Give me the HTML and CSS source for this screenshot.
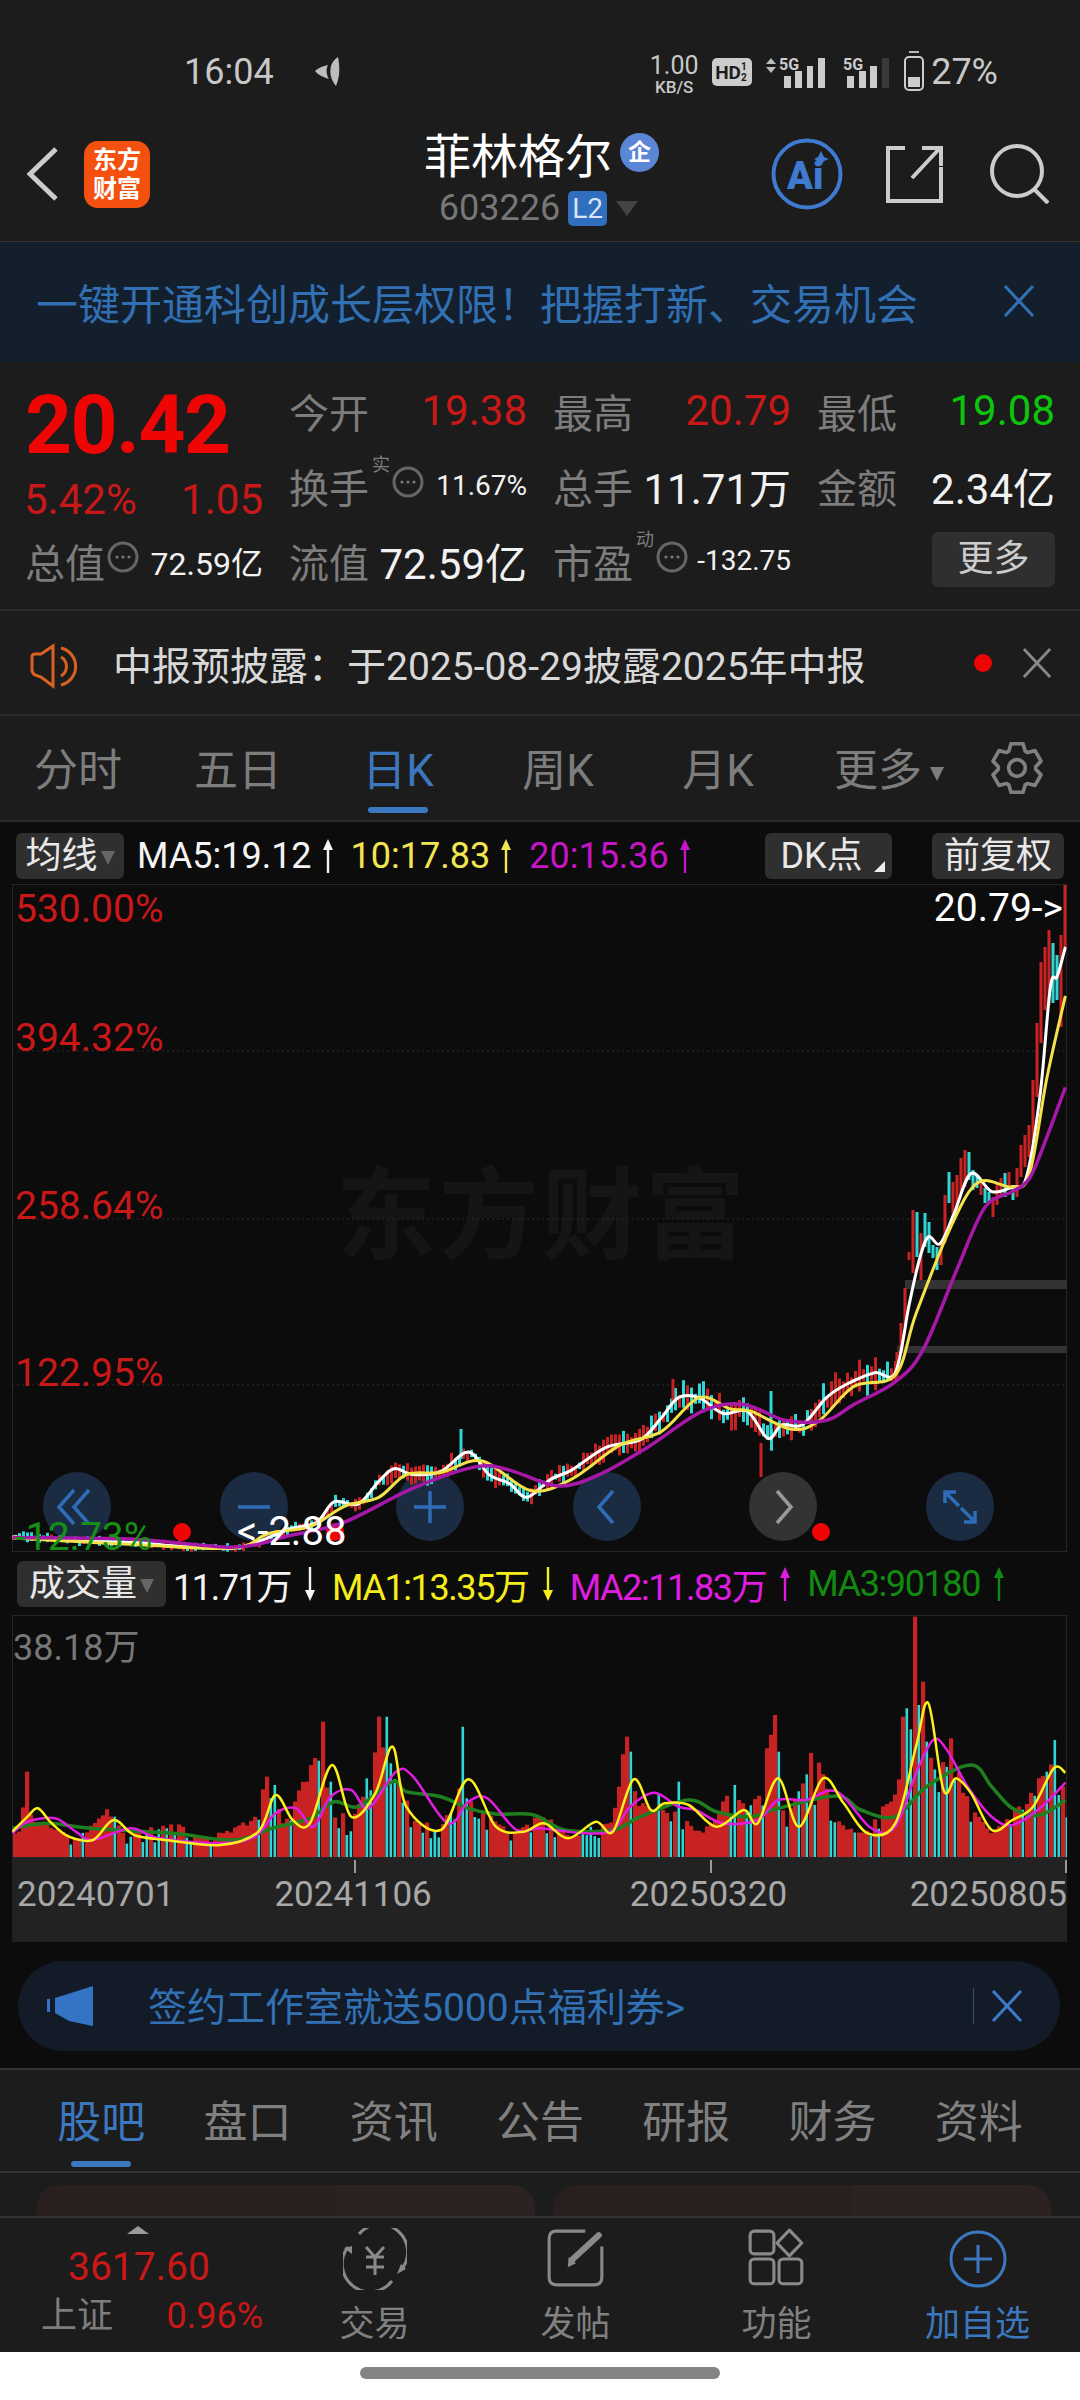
FILE: index.html
```html
<!DOCTYPE html>
<html lang="zh-CN">
<head>
  <meta charset="UTF-8">
  <meta name="viewport" content="width=device-width, initial-scale=1.0">
  <title>菲林格尔 603226</title>
  <link rel="stylesheet" href="styles.css">
</head>
<body>
  <svg class="defs" width="0" height="0">
    <symbol id="close" viewBox="0 0 32 32"><path d="M2 1 30 31M30 1 2 31" fill="none" stroke="currentColor" stroke-width="3"/></symbol>
    <symbol id="dots" viewBox="0 0 32 32"><circle cx="16" cy="16" r="14" fill="none" stroke="#666" stroke-width="3"/><circle cx="10" cy="16" r="1.6" fill="#777"/><circle cx="16" cy="16" r="1.6" fill="#777"/><circle cx="22" cy="16" r="1.6" fill="#777"/></symbol>
    <symbol id="up" viewBox="0 0 10 34"><path d="M5 0 10 11H6.2V34H3.8V11H0z" fill="currentColor"/></symbol>
    <symbol id="down" viewBox="0 0 10 34"><path d="M5 34 10 23H6.2V0H3.8V23H0z" fill="currentColor"/></symbol>
  </svg>

  <div class="phone">
    <div class="status">
      <span class="clock">16:04</span>
      <svg class="leaf" width="30" height="30" viewBox="0 0 30 30"><path d="M26 0C28 10 28 20 24 29 20 24 17 18 19 9 20 5 23 2 26 0ZM16 8C14 12 14 17 17 22 11 20 6 18 3 14 6 11 11 9 16 8Z" fill="#bdbdbd"/></svg>
      <div class="status-right">
        <div class="speed"><span class="speed-num">1.00</span><span class="speed-unit">KB/S</span></div>
        <div class="hd">HD<span class="hd-frac">1<br>2</span></div>
        <svg class="sig-a" width="62" height="38" viewBox="0 0 62 38">
          <path d="M5 2 10 8H0zM0 11H10L5 17z" fill="#bbb"/>
          <text x="13" y="14" class="sig-text">5G</text>
          <rect x="18" y="20" width="7" height="12" fill="#ccc"/><rect x="29" y="15" width="7" height="17" fill="#ccc"/><rect x="41" y="10" width="6" height="22" fill="#ccc"/><rect x="52" y="2" width="7" height="30" fill="#ccc"/>
        </svg>
        <svg class="sig-b" width="48" height="38" viewBox="0 0 48 38">
          <text x="0" y="14" class="sig-text">5G</text>
          <rect x="4" y="20" width="7" height="12" fill="#ccc"/><rect x="16" y="15" width="7" height="17" fill="#ccc"/><rect x="27" y="10" width="7" height="22" fill="#ccc"/><rect x="39" y="2" width="7" height="30" fill="#3a3a3a"/>
        </svg>
        <svg class="batt" width="22" height="40" viewBox="0 0 22 40"><rect x="6" y="0" width="10" height="2" fill="#bbb"/><rect x="2" y="6" width="18" height="33" rx="4" fill="none" stroke="#ccc" stroke-width="2"/><rect x="5" y="26" width="12" height="10" fill="#ccc"/></svg>
        <span class="batt-num">27%</span>
      </div>
    </div>

    <div class="nav">
      <div class="nav-left">
        <svg class="back" width="31" height="54" viewBox="0 0 31 54"><path d="M29 2 3 27 29 52" fill="none" stroke="#ccc" stroke-width="5"/></svg>
        <div class="logo">东方<br>财富</div>
      </div>
      <div class="nav-mid">
        <div class="title-row"><span class="title">菲林格尔</span><span class="ent">企</span></div>
        <div class="code-row"><span class="code">603226</span><span class="l2">L2</span><span class="code-tri"></span></div>
      </div>
      <div class="nav-right">
        <svg width="72" height="72" viewBox="0 0 72 72"><circle cx="36" cy="36" r="33.5" fill="none" stroke="#3e7ad0" stroke-width="4"/><text x="16" y="51" class="ai-text">Ai</text><path d="M50 13 53 19 58 21 53 23 50 28 47 23 43 21 47 19z" fill="#3e7ad0"/></svg>
        <svg class="share" width="58" height="58" viewBox="0 0 58 58"><path d="M19 3H2V56H55V22" fill="none" stroke="#ccc" stroke-width="4"/><path d="M26 33 54 3M36 3H55V21" fill="none" stroke="#ccc" stroke-width="4"/></svg>
        <svg class="search" width="60" height="60" viewBox="0 0 60 60"><circle cx="27" cy="27" r="25" fill="none" stroke="#ccc" stroke-width="4"/><path d="M44 45 58 59" stroke="#ccc" stroke-width="4"/></svg>
      </div>
    </div>

    <div class="banner">
      <span>一键开通科创成长层权限&#xFF01;把握打新、交易机会</span>
      <svg class="icon-x banner-x"><use href="#close"/></svg>
    </div>

    <div class="quote">
      <div class="price-box">
        <div class="price">20.42</div>
        <div class="change"><span>5.42%</span><span>1.05</span></div>
      </div>
      <div class="cell"><span class="lab">今开</span><span class="val up">19.38</span></div>
      <div class="cell"><span class="lab">最高</span><span class="val up">20.79</span></div>
      <div class="cell"><span class="lab">最低</span><span class="val down">19.08</span></div>
      <div class="cell"><span class="lab">换手</span><span class="tag">实</span><svg class="dots"><use href="#dots"/></svg><span class="val small">11.67%</span></div>
      <div class="cell"><span class="lab">总手</span><span class="val">11.71万</span></div>
      <div class="cell"><span class="lab">金额</span><span class="val">2.34亿</span></div>
      <div class="cell first"><span class="lab">总值</span><svg class="dots dots-tight"><use href="#dots"/></svg><span class="val mid">72.59亿</span></div>
      <div class="cell"><span class="lab">流值</span><span class="val">72.59亿</span></div>
      <div class="cell"><span class="lab">市盈</span><span class="tag">动</span><svg class="dots"><use href="#dots"/></svg><span class="val small">-132.75</span></div>
      <div class="cell more-cell"><span class="more-btn">更多</span></div>
    </div>

    <div class="notice">
      <svg width="80" height="80" viewBox="0 0 80 80"><path d="M12 34V47Q12 50 15 52L21 54 33 63V23L21 31 15 31Q12 31 12 34Z" fill="none" stroke="#d9621e" stroke-width="3"/><path d="M41 34A11 11 0 0 1 41 53M41 25A19 19 0 0 1 41 62" fill="none" stroke="#d9621e" stroke-width="3"/></svg>
      <span class="notice-text">中报预披露&#xFF1A;于2025-08-29披露2025年中报</span>
      <span class="red-dot"></span>
      <svg class="icon-x notice-x"><use href="#close"/></svg>
    </div>

    <div class="periods">
      <div class="period-list">
        <span class="period">分时</span>
        <span class="period">五日</span>
        <span class="period on">日K</span>
        <span class="period">周K</span>
        <span class="period">月K</span>
        <span class="period period-more">更多<i class="mini-tri"></i></span>
      </div>
      <svg class="gear" width="52" height="52" viewBox="0 0 50 50"><polygon points="17.1,8.8 19.2,1.7 30.8,1.7 32.9,8.8 35.1,10.1 42.3,8.3 48.1,18.4 43,23.7 43,26.3 48.1,31.6 42.3,41.7 35.1,39.9 32.9,41.2 30.8,48.3 19.2,48.3 17.1,41.2 14.9,39.9 7.7,41.7 1.9,31.6 7,26.3 7,23.7 1.9,18.4 7.7,8.3 14.9,10.1" fill="none" stroke="#808080" stroke-width="3.5" stroke-linejoin="round"/><circle cx="25" cy="25" r="8" fill="none" stroke="#808080" stroke-width="3.5"/></svg>
    </div>

    <div class="chart-area">
      <div class="ma-row">
        <span class="pick pick-ma">均线<i class="mini-tri dim"></i></span>
        <span class="ma white">MA5:19.12<svg class="arr"><use href="#up"/></svg></span>
        <span class="ma yellow">10:17.83<svg class="arr"><use href="#up"/></svg></span>
        <span class="ma purple">20:15.36<svg class="arr"><use href="#up"/></svg></span>
        <span class="pick pick-dk">DK点<i class="corner"></i></span>
        <span class="pick pick-fq">前复权</span>
      </div>

      <div class="plot" id="kPlot">
        <div class="watermark">东方财富</div>
        <div class="zoom-btns">
          <span class="round"><svg width="68" height="68" viewBox="0 0 68 68"><path d="M31 17 16 34 31 51M46 17 31 34 46 51" fill="none" stroke="#2f6cb8" stroke-width="3.5"/></svg></span>
          <span class="round"><svg width="68" height="68" viewBox="0 0 68 68"><path d="M18 34H50" stroke="#2f6cb8" stroke-width="3.5"/></svg></span>
          <span class="round"><svg width="68" height="68" viewBox="0 0 68 68"><path d="M18 34H50M34 18V50" stroke="#2f6cb8" stroke-width="3.5"/></svg></span>
          <span class="round"><svg width="68" height="68" viewBox="0 0 68 68"><path d="M40 18 26 34 40 50" fill="none" stroke="#2f6cb8" stroke-width="3.5"/></svg></span>
          <span class="round gray"><svg width="68" height="68" viewBox="0 0 68 68"><path d="M28 18 42 34 28 50" fill="none" stroke="#999" stroke-width="3.5"/></svg></span>
          <span class="round"><svg width="68" height="68" viewBox="0 0 68 68"><path d="M19 30V19H30M19 19 33 33M49 38V49H38M49 49 35 35" fill="none" stroke="#2f6cb8" stroke-width="3.5"/></svg></span>
        </div>
        <svg class="plot-svg" id="kSvg" viewBox="12 884 1055 668"></svg>
        <span class="axis-pct p1">530.00%</span>
        <span class="axis-pct p2">394.32%</span>
        <span class="axis-pct p3">258.64%</span>
        <span class="axis-pct p4">122.95%</span>
        <span class="axis-pct p5">-12.73%</span>
        <span class="mark-hi">20.79-&gt;</span>
        <span class="mark-lo">&lt;-2.88</span>
      </div>

      <div class="vol-row">
        <span class="pick pick-vol">成交量<i class="mini-tri dim"></i></span>
        <span class="ma white vol-first">11.71万<svg class="arr"><use href="#down"/></svg></span>
        <span class="ma yellow2">MA1:13.35万<svg class="arr"><use href="#down"/></svg></span>
        <span class="ma magenta">MA2:11.83万<svg class="arr"><use href="#up"/></svg></span>
        <span class="ma green">MA3:90180<svg class="arr"><use href="#up"/></svg></span>
      </div>

      <div class="plot vol-plot">
        <svg class="plot-svg" id="volSvg" viewBox="12 1615 1055 243"></svg>
        <span class="vol-max">38.18万</span>
      </div>

      <div class="dates">
        <i class="tick t1"></i><i class="tick t2"></i><i class="tick t3"></i>
        <span class="date d1">20240701</span>
        <span class="date d2">20241106</span>
        <span class="date d3">20250320</span>
        <span class="date d4">20250805</span>
      </div>

      <div class="promo">
        <svg width="48" height="42" viewBox="0 0 48 42"><path d="M46 1 8 13V28L22 36 46 41Z" fill="#3375c4"/><rect x="0" y="14" width="3" height="13" fill="#3375c4"/></svg>
        <span class="promo-text">签约工作室就送5000点福利券&gt;</span>
        <i class="promo-line"></i>
        <svg class="icon-x promo-x"><use href="#close"/></svg>
      </div>
    </div>

    <div class="info-tabs">
      <span class="info-tab on">股吧</span>
      <span class="info-tab">盘口</span>
      <span class="info-tab">资讯</span>
      <span class="info-tab">公告</span>
      <span class="info-tab">研报</span>
      <span class="info-tab">财务</span>
      <span class="info-tab">资料</span>
    </div>

    <div class="peek">
      <div class="peek-card"></div>
      <div class="peek-card"></div>
    </div>

    <div class="bottom">
      <div class="index">
        <i class="index-tri"></i>
        <span class="index-num">3617.60</span>
        <div class="index-row"><span class="index-name">上证</span><span class="index-pct">0.96%</span></div>
      </div>
      <div class="tool">
        <svg width="64" height="62" viewBox="0 0 64 62"><path d="M16 6A27 27 0 0 1 58 42M49 53A27 27 0 0 1 5 19" fill="none" stroke="#8a8a8a" stroke-width="3"/><path d="M1 20 9 18 9 26zM54 46 63 41 58 36z" fill="#8a8a8a"/><path d="M23 19 32 29 41 19M23 29H41M23 39H41M32 29V47" fill="none" stroke="#8a8a8a" stroke-width="3"/></svg>
        <span>交易</span>
      </div>
      <div class="tool">
        <svg width="64" height="62" viewBox="0 0 58 60"><path d="M38 3H10Q3 3 3 10V48Q3 55 10 55H47Q54 55 54 48V18" fill="none" stroke="#8a8a8a" stroke-width="3"/><path d="M25 31 51 7" stroke="#8a8a8a" stroke-width="6" stroke-linecap="round"/><path d="M21 38 22 28 29 34z" fill="#8a8a8a"/></svg>
        <span>发帖</span>
      </div>
      <div class="tool">
        <svg width="64" height="62" viewBox="0 0 58 60"><rect x="3" y="3" width="23" height="22" rx="4" fill="none" stroke="#8a8a8a" stroke-width="3"/><path d="M41 2 53 14.5 41 27 29 14.5Z" fill="none" stroke="#8a8a8a" stroke-width="3" stroke-linejoin="round"/><rect x="3" y="30" width="23" height="24" rx="4" fill="none" stroke="#8a8a8a" stroke-width="3"/><rect x="31" y="30" width="22" height="24" rx="4" fill="none" stroke="#8a8a8a" stroke-width="3"/></svg>
        <span>功能</span>
      </div>
      <div class="tool tool-on">
        <svg width="64" height="62" viewBox="0 0 64 62"><circle cx="32" cy="31" r="27" fill="none" stroke="#3c78c0" stroke-width="3"/><path d="M18 31H46M32 17V45" stroke="#3c78c0" stroke-width="3"/></svg>
        <span>加自选</span>
      </div>
    </div>

    <div class="home"><i class="home-bar"></i></div>
  </div>

  <script src="chart.js"></script>
</body>
</html>
```
FILE: styles.css
```css
* {
  box-sizing: border-box;
}

body {
  margin: 0;
  background: #fff;
  font-family: Roboto, "Noto Sans CJK SC", sans-serif;
}

.defs {
  position: absolute;
}

.phone {
  width: 1080px;
  height: 2400px;
  overflow: hidden;
  background: #1c1c1c;
  display: flex;
  flex-direction: column;
}

/* status bar */
.status {
  height: 120px;
  padding: 44px 0 0 184px;
  display: flex;
  align-items: flex-start;
  color: #c8c8c8;
}

.clock {
  font-size: 36px;
  line-height: 56px;
}

.leaf {
  margin: 13px 0 0 38px;
}

.status-right {
  margin-left: auto;
  padding-right: 82px;
  display: flex;
  align-items: flex-start;
}

.speed {
  width: 48px;
  margin-top: 9px;
  display: flex;
  flex-direction: column;
  align-items: center;
}

.speed-num {
  font-size: 25px;
  line-height: 25px;
}

.speed-unit {
  font-size: 17px;
  font-weight: 500;
  line-height: 18px;
}

.hd {
  width: 40px;
  height: 28px;
  margin: 14px 0 0 14px;
  padding-left: 3px;
  border-radius: 5px;
  background: #ccc;
  color: #1c1c1c;
  display: flex;
  align-items: center;
  font-size: 19px;
  font-weight: 700;
}

.hd-frac {
  font-size: 10px;
  line-height: 11px;
}

.sig-a {
  margin: 12px 0 0 14px;
}

.sig-b {
  margin: 12px 0 0 15px;
}

.sig-text {
  font-size: 16px;
  font-weight: 700;
  fill: #ccc;
}

.batt {
  margin: 7px 0 0 12px;
}

.batt-num {
  margin-left: 6px;
  font-size: 36px;
  line-height: 56px;
}

/* title bar */
.nav {
  height: 122px;
  padding: 0 30px 0 27px;
  border-bottom: 1px solid #333;
  display: grid;
  grid-template-columns: 1fr auto 1fr;
}

.nav-left {
  display: flex;
  align-items: center;
  gap: 26px;
  padding-bottom: 13px;
}

.logo {
  width: 66px;
  height: 67px;
  border-radius: 14px;
  background: #f4500f;
  color: #fff;
  font-size: 24px;
  font-weight: 700;
  line-height: 29px;
  text-align: center;
  padding-top: 5px;
}

.nav-mid {
  display: flex;
  flex-direction: column;
  align-items: center;
}

.title-row {
  margin-top: 4px;
  height: 56px;
  display: flex;
  align-items: center;
  gap: 8px;
  padding-left: 6px;
}

.title {
  font-size: 47px;
  color: #fff;
}

.ent {
  width: 39px;
  height: 39px;
  border-radius: 50%;
  background: #5b86d6;
  color: #fff;
  font-size: 23px;
  font-weight: 700;
  text-align: center;
  line-height: 39px;
}

.code-row {
  margin-top: 8px;
  display: flex;
  align-items: center;
}

.code {
  font-size: 36px;
  line-height: 40px;
  color: #777;
}

.l2 {
  width: 39px;
  height: 35px;
  margin-left: 8px;
  border-radius: 5px;
  background: #2f6fbd;
  color: #d6e4f5;
  font-size: 28px;
  line-height: 35px;
  text-align: center;
}

.code-tri {
  margin-left: 9px;
  border-left: 11px solid transparent;
  border-right: 11px solid transparent;
  border-top: 15px solid #444;
}

.nav-right {
  display: flex;
  align-items: center;
  justify-content: flex-end;
  padding-bottom: 13px;
}

.share {
  margin-left: 43px;
}

.search {
  margin-left: 46px;
}

.ai-text {
  font-size: 38px;
  font-weight: 900;
  fill: #3e7ad0;
}

.icon-x {
  display: block;
}

/* blue banner */
.banner {
  height: 120px;
  padding: 0 45px 2px 36px;
  background: #141f2d;
  color: #3270b4;
  font-size: 42px;
  display: flex;
  align-items: center;
  justify-content: space-between;
}

.banner-x {
  width: 32px;
  height: 32px;
}

/* quote table */
.quote {
  height: 249px;
  padding: 11px 25px 0 27px;
  border-bottom: 2px solid #2b2b2b;
  display: grid;
  grid-template-columns: 236px 238px 238px 238px;
  grid-template-rows: 75px 75px 75px;
  column-gap: 26px;
}

.price-box {
  grid-row: 1 / span 2;
  padding-top: 3px;
}

.price {
  margin-left: -2px;
  font-size: 82px;
  font-weight: 700;
  line-height: 98px;
  color: #f00505;
  letter-spacing: -1.5px;
}

.change {
  margin-left: -3px;
  display: flex;
  justify-content: space-between;
  font-size: 42px;
  line-height: 52px;
  color: #c91818;
}

.cell {
  display: flex;
  align-items: center;
  min-width: 0;
}

.lab {
  font-size: 40px;
  color: #7d7d7d;
}

.val {
  margin-left: auto;
  font-size: 42px;
  color: #f2f2f2;
  white-space: nowrap;
}

.val.up {
  color: #c91818;
}

.val.down {
  color: #0dc40d;
}

.val.small {
  font-size: 28px;
}

.val.mid {
  font-size: 32px;
}

.tag {
  align-self: flex-start;
  margin: 7px 0 0 3px;
  font-size: 18px;
  line-height: 20px;
  color: #7d7d7d;
}

.dots {
  width: 32px;
  height: 32px;
  margin-left: 2px;
  margin-top: -8px;
  flex: none;
}

.dots-tight {
  margin-left: 2px;
}

.first {
  grid-column: 1;
  margin-left: -2px;
}

.more-cell {
  justify-content: flex-end;
}

.more-btn {
  width: 123px;
  height: 55px;
  margin-top: -2px;
  border-radius: 6px;
  background: #2f2f2f;
  color: #ccc;
  font-size: 36px;
  line-height: 55px;
  text-align: center;
}

/* notice */
.notice {
  height: 105px;
  padding: 0 28px 0 20px;
  border-bottom: 2px solid #2b2b2b;
  display: flex;
  align-items: center;
}

.notice-text {
  margin-left: 13px;
  font-size: 39px;
  color: #d8d8d8;
}

.red-dot {
  width: 18px;
  height: 18px;
  margin-left: auto;
  border-radius: 50%;
  background: #f00505;
}

.notice-x {
  width: 30px;
  height: 30px;
  margin-left: 30px;
  color: #888;
}

/* period tabs */
.periods {
  height: 104px;
  display: flex;
  align-items: center;
}

.period-list {
  margin-left: -2px;
  padding-top: 6px;
  display: grid;
  grid-template-columns: repeat(6, 160px);
}

.period {
  position: relative;
  font-size: 44px;
  line-height: 60px;
  color: #7d7d7d;
  text-align: center;
}

.period.on {
  color: #3c78c0;
}

.period.on::after {
  content: "";
  position: absolute;
  left: 50px;
  bottom: -12px;
  width: 60px;
  height: 6px;
  border-radius: 3px;
  background: #3c78c0;
}

.period-more {
  padding-left: 22px;
}

.mini-tri {
  display: inline-block;
  margin-left: 8px;
  vertical-align: middle;
  border-left: 7px solid transparent;
  border-right: 7px solid transparent;
  border-top: 14px solid #7d7d7d;
}

.mini-tri.dim {
  margin-left: 3px;
  border-top-color: #666;
}

.gear {
  margin-left: 33px;
  flex: none;
}

/* chart */
.chart-area {
  height: 1248px;
  border-top: 2px solid #2b2b2b;
  background: #0c0c0c;
}

.ma-row {
  height: 62px;
  padding: 6px 16px 0;
  display: flex;
  align-items: center;
  gap: 18px;
}

.pick {
  height: 46px;
  border-radius: 6px;
  background: #2f2f2f;
  color: #e8e8e8;
  font-size: 36px;
  line-height: 46px;
  text-align: center;
  white-space: nowrap;
}

.pick-ma {
  width: 108px;
  margin-right: -5px;
}

.pick-dk {
  position: relative;
  width: 127px;
  margin-left: auto;
  padding-right: 14px;
}

.corner {
  position: absolute;
  right: 7px;
  bottom: 7px;
  border-left: 11px solid transparent;
  border-bottom: 11px solid #eee;
}

.pick-fq {
  width: 132px;
  margin-left: 22px;
}

.ma {
  font-size: 36px;
  display: flex;
  align-items: center;
  gap: 11px;
  white-space: nowrap;
}

.arr {
  width: 10px;
  height: 34px;
  flex: none;
}

.white { color: #f4f4f4; }
.yellow { color: #f2e650; }
.purple { color: #c814c8; }
.yellow2 { color: #f6ee1a; }
.magenta { color: #e01ce0; }
.green { color: #128a12; }

.plot {
  position: relative;
  width: 1055px;
  height: 668px;
  margin-left: 12px;
  border: 1px solid #262626;
}

.plot-svg {
  position: absolute;
  left: -1px;
  top: -1px;
  width: 1055px;
  height: 668px;
}

.watermark {
  position: absolute;
  left: 323px;
  top: 282px;
  font-size: 100px;
  font-weight: 700;
  line-height: 100px;
  letter-spacing: 3px;
  color: #151515;
  white-space: nowrap;
}

.zoom-btns {
  position: absolute;
  left: 30px;
  right: 72px;
  top: 587px;
  display: flex;
  justify-content: space-between;
}

.round {
  width: 68px;
  height: 69px;
  border-radius: 50%;
  background: #1b2c42;
  display: flex;
  align-items: center;
}

.round.gray {
  background: #333;
}

.axis-pct {
  position: absolute;
  left: 2px;
  font-size: 39px;
  line-height: 44px;
  color: #c81818;
}

.p1 { top: 2px; }
.p2 { top: 131px; }
.p3 { top: 299px; }
.p4 { top: 466px; }
.p5 { top: 630px; color: #159015; }

.mark-hi {
  position: absolute;
  right: 3px;
  top: 1px;
  font-size: 39px;
  line-height: 44px;
  color: #fff;
}

.mark-lo {
  position: absolute;
  left: 224px;
  top: 625px;
  font-size: 40px;
  line-height: 44px;
  color: #fff;
}

.vol-row {
  height: 63px;
  padding: 0 16px 0 17px;
  display: flex;
  align-items: center;
  gap: 17px;
}

.vol-row .ma {
  letter-spacing: -1.4px;
  gap: 14px;
}

.pick-vol {
  width: 149px;
  margin-right: -10px;
}

.vol-plot {
  height: 243px;
}

.vol-plot .plot-svg {
  height: 243px;
}

.vol-max {
  position: absolute;
  left: 0;
  top: 10px;
  font-size: 36px;
  line-height: 44px;
  color: #777;
}

.dates {
  position: relative;
  width: 1055px;
  height: 84px;
  margin-left: 12px;
  background: #222;
  display: flex;
  padding-top: 15px;
  font-size: 35px;
  line-height: 44px;
  color: #a8a8a8;
}

.tick {
  position: absolute;
  top: 2px;
  width: 2px;
  height: 13px;
  background: #999;
}

.t1 { left: 342px; }
.t2 { left: 698px; }
.t3 { right: 0; }

.d1 { margin-left: 5px; }
.d2 { margin-left: 100px; }
.d3 { margin-left: 198px; }
.d4 { margin-left: auto; }

.promo {
  height: 90px;
  margin: 19px 20px 0 18px;
  padding: 0 36px 0 29px;
  border-radius: 45px;
  background: #121b27;
  display: flex;
  align-items: center;
}

.promo-text {
  margin: 0 0 4px 53px;
  font-size: 39px;
  color: #3270b4;
}

.promo-line {
  width: 1px;
  height: 36px;
  margin-left: auto;
  background: #3a4f68;
}

.promo-x {
  width: 34px;
  height: 32px;
  margin-left: 16px;
  color: #3a7ac8;
}

/* lower tabs */
.info-tabs {
  height: 105px;
  padding: 4px 28px 0;
  border-top: 2px solid #333;
  border-bottom: 2px solid #333;
  display: grid;
  grid-template-columns: repeat(7, 1fr);
  align-items: center;
}

.info-tab {
  position: relative;
  font-size: 44px;
  line-height: 60px;
  color: #808080;
  text-align: center;
}

.info-tab.on {
  color: #3c78c0;
}

.info-tab.on::after {
  content: "";
  position: absolute;
  left: 43px;
  bottom: -14px;
  width: 60px;
  height: 6px;
  border-radius: 3px;
  background: #3c78c0;
}

.peek {
  height: 43px;
  padding: 12px 29px 0 36px;
  overflow: hidden;
  display: flex;
  gap: 18px;
}

.peek-card {
  flex: 1;
  height: 90px;
  border-radius: 24px;
  background: linear-gradient(to right, #2a1f1f 60%, #2c2222 60%);
}

/* bottom bar */
.bottom {
  height: 136px;
  border-top: 2px solid #333;
  display: grid;
  grid-template-columns: 274px repeat(4, 201px);
}

.index {
  padding: 8px 16px 0 41px;
  display: flex;
  flex-direction: column;
}

.index-tri {
  align-self: flex-start;
  margin-left: 86px;
  border-left: 11px solid transparent;
  border-right: 11px solid transparent;
  border-bottom: 8px solid #999;
}

.index-num {
  margin: 8px 0 0 27px;
  font-size: 39px;
  line-height: 50px;
  color: #c81818;
}

.index-row {
  display: flex;
  justify-content: space-between;
  margin-right: -5px;
  margin-top: 1px;
  line-height: 46px;
}

.index-name {
  font-size: 36px;
  color: #7d7d7d;
}

.index-pct {
  font-size: 36px;
  color: #c81818;
}

.tool {
  padding-top: 10px;
  display: flex;
  flex-direction: column;
  align-items: center;
  font-size: 35px;
  line-height: 46px;
  color: #808080;
}

.tool span {
  margin-top: 12px;
}

.tool-on {
  color: #3c78c0;
}

.home {
  flex: 1;
  background: #fff;
  padding-top: 15px;
  display: flex;
  justify-content: center;
}

.home-bar {
  width: 360px;
  height: 12px;
  border-radius: 6px;
  background: #848484;
}
```
FILE: chart.js
```js
// points below are read off the chart, in page pixels after conversion
const NS = "http://www.w3.org/2000/svg";
let seed = 20240701;

function rnd() {
  seed = (seed * 16807) % 2147483647;
  return seed / 2147483647;
}

function add(svg, tag, attrs) {
  const el = document.createElementNS(NS, tag);
  for (const k in attrs) el.setAttribute(k, attrs[k]);
  svg.appendChild(el);
  return el;
}

function kPts(raw) {
  return raw.map(p => [p[0] / 1.452, 870 + p[1] / 2.208]);
}

function volPts(raw) {
  return raw.map(p => [p[0] / 1.452, 1560 + p[1] / 3]);
}

function interp(pts, x) {
  if (x <= pts[0][0]) return pts[0][1];
  for (let i = 1; i < pts.length; i++) {
    if (x <= pts[i][0]) {
      const t = (x - pts[i - 1][0]) / (pts[i][0] - pts[i - 1][0]);
      return pts[i - 1][1] + t * (pts[i][1] - pts[i - 1][1]);
    }
  }
  return pts[pts.length - 1][1];
}

function smooth(pts) {
  let d = "M" + pts[0][0].toFixed(1) + " " + pts[0][1].toFixed(1);
  for (let i = 0; i < pts.length - 1; i++) {
    const a = pts[Math.max(i - 1, 0)], b = pts[i], c = pts[i + 1], e = pts[Math.min(i + 2, pts.length - 1)];
    const c1x = b[0] + (c[0] - a[0]) / 6, c1y = b[1] + (c[1] - a[1]) / 6;
    const c2x = c[0] - (e[0] - b[0]) / 6, c2y = c[1] - (e[1] - b[1]) / 6;
    d += "C" + [c1x, c1y, c2x, c2y, c[0], c[1]].map(n => n.toFixed(1)).join(" ");
  }
  return d;
}

function line(svg, pts, color, w) {
  add(svg, "path", { d: smooth(pts), fill: "none", stroke: color, "stroke-width": w, "stroke-linejoin": "round" });
}

const RED = "#c92222";
const CYAN = "#2fd6d6";

/* ---- price chart ---- */
const ma5 = kPts([[18,1472],[100,1480],[200,1485],[250,1492],[340,1497],[380,1480],[420,1455],[460,1440],[485,1395],[520,1400],[550,1350],[572,1322],[600,1335],[640,1328],[680,1285],[710,1335],[740,1355],[765,1385],[800,1345],[830,1325],[880,1275],[930,1258],[960,1210],[985,1165],[1015,1165],[1050,1200],[1085,1195],[1115,1255],[1135,1225],[1165,1225],[1200,1165],[1230,1135],[1270,1110],[1300,1110],[1320,960],[1335,860],[1348,810],[1365,825],[1385,760],[1410,670],[1440,710],[1470,700],[1490,680],[1510,500],[1525,260],[1535,235],[1547,170]]);
const ma10 = kPts([[18,1475],[200,1490],[340,1497],[390,1465],[450,1450],[500,1405],[550,1385],[590,1335],[640,1330],[700,1305],[770,1370],[830,1345],[900,1270],[960,1240],[1015,1165],[1060,1190],[1090,1195],[1150,1235],[1190,1215],[1240,1140],[1300,1115],[1330,980],[1380,790],[1420,690],[1470,700],[1495,670],[1520,460],[1547,278]]);
const ma20 = kPts([[18,1474],[200,1478],[340,1495],[420,1470],[500,1440],[600,1365],[690,1318],[740,1325],[810,1360],[870,1335],[940,1275],[1020,1195],[1080,1180],[1140,1215],[1200,1215],[1240,1180],[1300,1130],[1340,1060],[1390,880],[1430,745],[1470,710],[1495,680],[1520,590],[1547,480]]);

// the last bars, [x, top, bottom, colour]
const lastBars = [
  [897,1352,1377,RED],[901,1323,1353,RED],[905,1288,1327,RED],[909,1252,1260,RED],[913,1210,1273,RED],
  [917,1212,1257,CYAN],[921,1233,1280,RED],[925,1213,1247,CYAN],[929,1222,1253,CYAN],[933,1245,1258,CYAN],
  [937,1247,1270,CYAN],[941,1243,1265,RED],[945,1195,1243,RED],[949,1172,1203,CYAN],[953,1182,1223,RED],
  [957,1175,1213,RED],[961,1158,1193,RED],[965,1150,1187,RED],[969,1152,1180,CYAN],[973,1170,1190,CYAN],
  [977,1175,1188,CYAN],[981,1182,1195,RED],[985,1188,1203,CYAN],[989,1192,1203,CYAN],[993,1197,1217,RED],
  [997,1182,1205,RED],[1001,1178,1197,RED],[1005,1173,1197,CYAN],[1009,1172,1190,RED],[1013,1185,1200,CYAN],
  [1017,1168,1197,RED],[1021,1145,1177,RED],[1025,1135,1167,RED],[1029,1125,1157,RED],[1033,1080,1143,RED],
  [1037,1023,1097,RED],[1041,962,1043,RED],[1045,947,1010,RED],[1049,930,1005,RED],[1053,943,1003,CYAN],
  [1057,955,1000,CYAN],[1061,935,1027,RED],[1065,885,947,RED],
  // spikes that stick out of the run
  [461,1429,1459,CYAN],[761,1443,1477,RED],[771,1391,1440,CYAN],[673,1379,1404,RED]
];

function drawK() {
  const svg = document.getElementById("kSvg");
  [1051, 1219, 1385].forEach(y => {
    add(svg, "line", { x1: 12, x2: 1067, y1: y, y2: y, stroke: "#2c2c2c", "stroke-width": 1, "stroke-dasharray": "2 3" });
  });
  add(svg, "rect", { x: 905, y: 1280, width: 162, height: 9, fill: "#333" });
  add(svg, "rect", { x: 897, y: 1346, width: 170, height: 7, fill: "#333" });

  for (let x = 14; x < 895; x += 4) {
    const y = interp(ma5, x);
    const rising = interp(ma5, x + 6) < interp(ma5, x - 6);
    const a = 1.5 + (1552 - y) * 0.028;
    const mid = y + (rnd() - 0.5) * a * 1.6;
    const len = a * (0.8 + rnd() * 2);
    const up = rnd() < (rising ? 0.72 : 0.28);
    add(svg, "rect", { x: x, y: mid - len, width: 3, height: len * 2, fill: up ? RED : CYAN });
  }
  lastBars.forEach(b => {
    add(svg, "rect", { x: b[0] - 1.5, y: b[1], width: 3, height: b[2] - b[1], fill: b[3] });
  });

  [182, 335, 821].forEach(x => add(svg, "circle", { cx: x, cy: 1532, r: 9, fill: "#f00505" }));

  line(svg, ma5, "#fff", 3);
  line(svg, ma10, "#f5e24a", 3);
  line(svg, ma20, "#a818a8", 3.5);
}

/* ---- volume chart ---- */
const volTop = volPts([[18,820],[30,810],[37,635],[45,760],[80,800],[110,830],[145,770],[155,740],[180,810],[260,790],[300,830],[345,795],[370,770],[390,620],[410,780],[455,585],[467,485],[480,770],[520,740],[550,470],[575,610],[600,770],[640,800],[665,640],[700,730],[740,810],[790,755],[830,830],[860,780],[890,780],[908,530],[925,715],[960,740],[990,760],[1020,820],[1060,685],[1100,715],[1122,465],[1140,800],[1175,570],[1190,595],[1220,790],[1260,810],[1305,650],[1310,470],[1326,170],[1338,365],[1345,600],[1378,535],[1400,680],[1440,810],[1490,710],[1510,640],[1525,605],[1547,650]]);
const volCyan = volPts([[165,770],[397,675],[478,665],[530,655],[560,470],[565,610],[670,500],[675,715],[915,575],[955,700],[985,665],[1065,675],[1130,575],[1332,435],[1345,545],[1530,540],[1518,635]]);
// tallest red bars, kept at full height
const volPeaks = volPts([[37,635],[467,485],[550,470],[908,530],[1122,465],[1310,470],[1326,170],[1338,365],[1378,535]]);
const volMa1 = volPts([[18,815],[40,770],[55,745],[75,790],[100,830],[135,840],[165,780],[195,825],[240,840],[320,855],[375,815],[400,705],[425,780],[450,790],[482,615],[510,770],[545,700],[570,560],[590,740],[640,810],[680,658],[720,800],[760,815],[790,790],[825,835],[865,785],[890,815],[920,658],[945,750],[965,730],[1000,735],[1040,800],[1080,750],[1100,790],[1130,655],[1160,800],[1195,655],[1225,730],[1260,820],[1300,790],[1330,560],[1348,430],[1370,690],[1388,655],[1410,700],[1440,810],[1470,780],[1500,740],[1530,625],[1547,638]]);
const volMa2 = volPts([[18,820],[40,785],[80,775],[110,815],[135,840],[190,805],[230,835],[320,850],[370,830],[400,760],[430,745],[455,800],[480,710],[510,690],[535,745],[575,635],[600,650],[650,790],[680,725],[708,715],[750,810],[785,805],[850,820],[890,810],[915,740],[950,698],[985,740],[1010,750],[1050,790],[1100,780],[1130,720],[1170,720],[1215,695],[1265,805],[1300,800],[1330,640],[1355,540],[1375,570],[1405,680],[1440,770],[1470,795],[1510,745],[1547,668]]);
const volMa3 = volPts([[18,805],[70,790],[130,805],[250,820],[340,840],[395,805],[450,775],[485,725],[520,740],[570,665],[590,695],[640,710],[680,745],[720,762],[775,765],[820,810],[890,810],[930,770],[1000,720],[1040,755],[1090,770],[1130,745],[1215,708],[1250,750],[1300,770],[1345,680],[1410,615],[1440,680],[1470,745],[1510,765],[1547,720]]);

function barIndex(x) {
  return Math.round((x - 14) / 4);
}

function drawVol() {
  const svg = document.getElementById("volSvg");
  const base = 1857;
  const cyanAt = {}, peakAt = {};
  volCyan.forEach(p => { cyanAt[barIndex(p[0])] = p[1]; });
  volPeaks.forEach(p => { peakAt[barIndex(p[0])] = p[1]; });

  const cyans = [];
  for (let i = 0, x = 13; x < 1066; i++, x += 4) {
    const top = interp(volTop, x + 2);
    const h = peakAt[i] !== undefined ? base - peakAt[i] : (base - top) * (0.82 + rnd() * 0.18);
    const isCyan = peakAt[i] === undefined && (cyanAt[i] !== undefined || rnd() < 0.3);
    if (isCyan) {
      const ch = cyanAt[i] !== undefined ? base - cyanAt[i] : h * (0.55 + rnd() * 0.4);
      cyans.push([x, ch]);
    } else {
      add(svg, "rect", { x: x, y: base - h, width: 4.2, height: h, fill: RED });
    }
  }
  cyans.forEach(c => {
    add(svg, "rect", { x: c[0] + 0.5, y: base - c[1], width: 2.6, height: c[1], fill: CYAN });
  });

  line(svg, volMa3, "#1f7f1f", 3.5);
  line(svg, volMa2, "#e01ce0", 2.5);
  line(svg, volMa1, "#ffef1a", 2.5);
}

drawK();
drawVol();
```
